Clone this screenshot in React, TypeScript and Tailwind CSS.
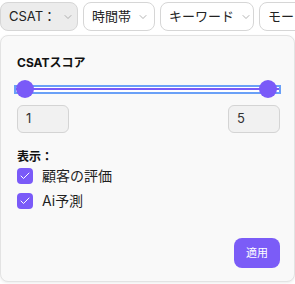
import { ChevronDown, Check } from 'lucide-react';

const font = { fontFamily: '"Inter", "Noto Sans CJK JP", sans-serif' };

function FilterButton({ label, active, width }: { label: string; active?: boolean; width: string }) {
  return (
    <button
      className={`h-[29px] ${width} shrink-0 flex items-center gap-[6px] pl-[8px] rounded-lg border border-[#d6d6d6] text-[13px] text-[#222] ${
        active ? 'bg-[#ececec]' : 'bg-white'
      }`}
    >
      <span className="whitespace-nowrap">{label}</span>
      <ChevronDown className="w-3 h-3 shrink-0 text-[#9a9a9a]" strokeWidth={1.5} />
    </button>
  );
}

function CheckRow({ label }: { label: string }) {
  return (
    <label className="flex items-center gap-[9px] leading-4">
      <span className="w-4 h-4 rounded-[4px] bg-[#7a5af8] flex items-center justify-center">
        <Check className="w-3 h-3 text-white" strokeWidth={2} />
      </span>
      <span className="text-[14px] text-[#1f1f1f]">{label}</span>
    </label>
  );
}

export default function App() {
  return (
    <div style={font} className="w-[295px] h-[284px] bg-white overflow-hidden">
      <div className="flex gap-[5px] pt-[2px] overflow-hidden">
        <FilterButton label="CSAT：" active width="w-[78px]" />
        <FilterButton label="時間帯" width="w-[72px]" />
        <FilterButton label="キーワード" width="w-[94px]" />
        <FilterButton label="モード" width="w-[72px]" />
      </div>

      <div className="mt-[4px] h-[247px] bg-[#f9f9f9] border border-[#e3e3e3] rounded-lg shadow-[0_1px_3px_rgba(0,0,0,0.08)] px-4 pt-[19px]">
        <h3 className="text-[12px] leading-4 font-bold text-[#111]">CSATスコア</h3>

        <div className="relative mt-[9px] -mx-[3px] h-[18px] flex items-center">
          <div className="w-full h-[9px] border-2 border-[#6aa0f7] bg-white flex items-center">
            <div className="w-full h-[2px] bg-[#7a5af8]" />
          </div>
          <div className="absolute left-[2px] top-0 w-[18px] h-[18px] rounded-full bg-[#7a5af8]" />
          <div className="absolute right-[4px] top-0 w-[18px] h-[18px] rounded-full bg-[#7a5af8]" />
        </div>

        <div className="flex justify-between mt-[7px]">
          <div className="w-[52px] h-[28px] rounded-md border border-[#d4d4d4] bg-[#f1f1f1] flex items-center pl-2 text-[13px] text-[#333]">
            1
          </div>
          <div className="w-[52px] h-[28px] rounded-md border border-[#d4d4d4] bg-[#f1f1f1] flex items-center pl-2 text-[13px] text-[#333] mr-[-2px]">
            5
          </div>
        </div>

        <div className="mt-[16px] text-[12px] leading-4 font-bold text-[#111]">表示：</div>
        <div className="mt-[3px] flex flex-col gap-[9px]">
          <CheckRow label="顧客の評価" />
          <CheckRow label="Ai予測" />
        </div>

        <div className="flex justify-end mt-[29px] mr-[-2px]">
          <button className="w-[46px] h-[30px] rounded-lg bg-[#7b5cf7] text-white text-[11px]">適用</button>
        </div>
      </div>
    </div>
  );
}
